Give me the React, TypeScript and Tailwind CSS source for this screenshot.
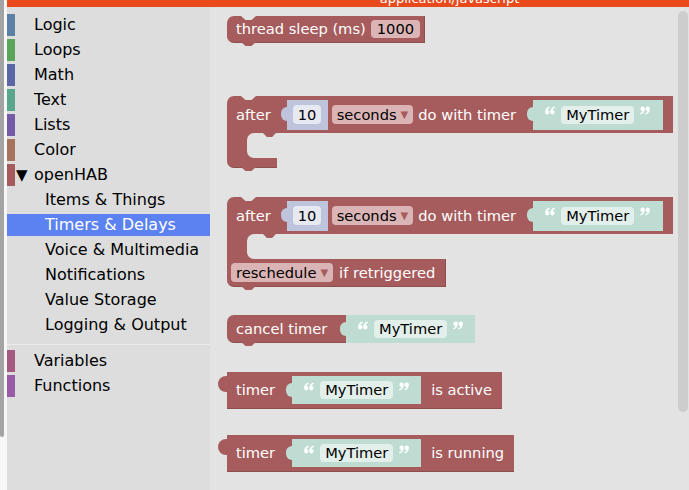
import React from "react";

const categories = [
  { name: "Logic", strip: "bg-[#5b80a5]" },
  { name: "Loops", strip: "bg-[#5ba55b]" },
  { name: "Math", strip: "bg-[#5b67a5]" },
  { name: "Text", strip: "bg-[#5ba58c]" },
  { name: "Lists", strip: "bg-[#745ba5]" },
  { name: "Color", strip: "bg-[#a5745b]" },
];

const subCategories = [
  "Items & Things",
  "Timers & Delays",
  "Voice & Multimedia",
  "Notifications",
  "Value Storage",
  "Logging & Output",
];

const Notch = () => (
  <span className="absolute left-[14px] top-0 h-[4px] w-[15px] bg-[#e3e3e3] [clip-path:polygon(0_0,100%_0,70%_100%,30%_100%)]" />
);

const NextTab = () => (
  <span className="absolute left-[14px] top-full h-[4px] w-[15px] bg-[#a65c5c] [clip-path:polygon(0_0,100%_0,70%_100%,30%_100%)]" />
);

// one "6" shaped quote mark, drawn around x = cx
const mark = (cx: number) =>
  `M${cx - 2.4} 6.2 C${cx - 2.4} 3.2 ${cx - 0.6} 1.2 ${cx + 2} 0.6 L${cx + 2.2} 1.9 C${cx + 0.8} 2.4 ${cx - 0.1} 3.1 ${cx} 4 A2.2 2.2 0 1 1 ${cx - 2.4} 6.2 Z`;

const Quote = ({ close }: { close?: boolean }) => (
  <svg
    width="10"
    height="9"
    viewBox="0 0 10 9"
    className={close ? "-mt-[8px] rotate-180" : "-mt-[8px]"}
  >
    <path d={mark(2.5) + mark(7.6)} fill="#ffffff" />
  </svg>
);

const TextShadow = ({ tall }: { tall?: boolean }) => (
  <div
    className={
      tall
        ? "relative flex h-[30px] w-[130px] items-center bg-[#bedcd2] pl-[12px]"
        : "relative flex h-[28px] w-[129px] items-center bg-[#bedcd2] pl-[12px]"
    }
  >
    <span className="absolute right-full top-[7px] h-[14px] w-[6px] rounded-l-full bg-[#bedcd2]" />
    <Quote />
    <span className="ml-[6px] mr-[6px] rounded-[4px] bg-[#e2efea] px-[5px] leading-[18px] text-black">MyTimer</span>
    <Quote close />
  </div>
);

const NumberShadow = () => (
  <div className="relative ml-[16px] flex h-[30px] w-[41px] items-center bg-[#bfc4dd] pl-[6px]">
    <span className="absolute right-full top-[7px] h-[14px] w-[6px] rounded-l-full bg-[#bfc4dd]" />
    <span className="rounded-[4px] bg-[#e7e9f2] px-[5px] leading-[19px] text-black">10</span>
  </div>
);

const Dropdown = ({ label }: { label: string }) => (
  <span className="flex h-[19px] items-center rounded-[4px] bg-[#dbb5b5] pl-[5px] pr-[5px] text-black">
    {label}
    <span className="ml-[4px] text-[10px] text-[#a65c5c]">▼</span>
  </span>
);

const AfterRow = () => (
  <div className="flex h-[37px] items-center rounded-tl-[7px] bg-[#a65c5c] pl-[9px] pr-[10px]">
    <span>after</span>
    <NumberShadow />
    <span className="ml-[4px]">
      <Dropdown label="seconds" />
    </span>
    <span className="ml-[5px] mr-[17px]">do with timer</span>
    <TextShadow tall />
  </div>
);

const Hole = () => (
  <div className="flex h-[25px]">
    <div className="w-[20px] bg-[#a65c5c]" />
    <div className="w-[40px] bg-[#a65c5c]">
      <div className="relative h-full rounded-l-[7px] bg-[#e3e3e3]">
        <span className="absolute left-[16px] top-0 h-[4px] w-[13px] bg-[#a65c5c] [clip-path:polygon(0_0,100%_0,70%_100%,30%_100%)]" />
      </div>
    </div>
  </div>
);

const TimerCheck = ({ label, className }: { label: string; className: string }) => (
  <div className={className}>
    <div className="relative flex h-[37px] w-fit items-center border-b border-[#8e4e4e] bg-[#a65c5c] pl-[9px] pr-[10px]">
      <span className="absolute right-full top-[4px] h-[16px] w-[9px] rounded-l-full bg-[#a65c5c]" />
      <span className="mr-[17px]">timer</span>
      <TextShadow />
      <span className="ml-[10px]">{label}</span>
    </div>
  </div>
);

export default function App() {
  return (
    <div className="flex h-[490px] w-[689px] overflow-hidden bg-[#f7f7f7] font-['DejaVu_Sans',sans-serif]">
      {/* window edge */}
      <div className="flex w-[7px] shrink-0">
        <div className="h-[437px] w-[4px] rounded-b-[2px] bg-[#a4a4a4]" />
      </div>

      <div className="flex flex-1 flex-col">
        {/* title bar */}
        <div className="flex h-[7px] shrink-0 justify-center overflow-hidden bg-[#e84a1c] pl-[203px]">
          <span className="-mt-[9px] text-[13px] leading-[16px] text-white">application/javascript</span>
        </div>

        <div className="flex flex-1">
          {/* toolbox */}
          <div className="w-[203px] shrink-0 bg-[#dddddd] pt-[7px] text-[16px] text-black">
            {categories.map((c) => (
              <div key={c.name} className="mb-[3px] flex h-[22px] items-center">
                <span className={`h-full w-[8px] ${c.strip}`} />
                <span className="ml-[19px]">{c.name}</span>
              </div>
            ))}
            <div className="mb-[3px] flex h-[22px] items-center">
              <span className="h-full w-[8px] bg-[#a55b5b]" />
              <span className="ml-[1px] w-[18px] text-[15px]">▼</span>
              <span>openHAB</span>
            </div>
            {subCategories.map((s) => (
              <div
                key={s}
                className={
                  s === "Timers & Delays"
                    ? "mb-[3px] flex h-[22px] items-center bg-[#5b82f0] pl-[38px] text-white"
                    : "mb-[3px] flex h-[22px] items-center pl-[38px]"
                }
              >
                {s}
              </div>
            ))}
            <div className="flex h-[11px] items-center">
              <div className="h-[1px] w-full bg-[#ebebeb]" />
            </div>
            <div className="mb-[3px] flex h-[22px] items-center">
              <span className="h-full w-[8px] bg-[#a55b80]" />
              <span className="ml-[19px]">Variables</span>
            </div>
            <div className="mb-[3px] flex h-[22px] items-center">
              <span className="h-full w-[8px] bg-[#995ba5]" />
              <span className="ml-[19px]">Functions</span>
            </div>
          </div>

          {/* flyout workspace */}
          <div className="flex flex-1 bg-[#e3e3e3]">
            <div className="flex flex-1 flex-col items-start pl-[17px] text-[14.67px] text-white">
              {/* thread sleep */}
              <div className="relative mt-[9px] flex h-[27px] items-center rounded-l-[7px] border-b border-r border-[#8e4e4e] bg-[#a65c5c] pl-[9px] pr-[4px]">
                <Notch />
                <NextTab />
                <span>thread sleep (ms)</span>
                <span className="ml-[5px] rounded-[4px] bg-[#dbb5b5] px-[6px] leading-[18px] text-black">1000</span>
              </div>

              {/* after ... do with timer */}
              <div className="relative mt-[53px]">
                <Notch />
                <AfterRow />
                <Hole />
                <div className="relative h-[10px] w-[50px] rounded-bl-[7px] border-b border-[#8e4e4e] bg-[#a65c5c]">
                  <NextTab />
                </div>
              </div>

              {/* after ... reschedule */}
              <div className="relative mt-[29px]">
                <Notch />
                <AfterRow />
                <Hole />
                <div className="relative flex h-[28px] w-[219px] items-center rounded-bl-[7px] border-b border-r border-[#8e4e4e] bg-[#a65c5c] pl-[4px]">
                  <Dropdown label="reschedule" />
                  <span className="ml-[6px]">if retriggered</span>
                  <NextTab />
                </div>
              </div>

              {/* cancel timer */}
              <div className="relative mt-[28px] flex">
                <Notch />
                <div className="relative flex h-[28px] w-[119px] items-center rounded-l-[7px] border-b border-[#8e4e4e] bg-[#a65c5c] pl-[9px]">
                  <span>cancel timer</span>
                  <NextTab />
                </div>
                <TextShadow />
              </div>

              <TimerCheck label="is active" className="mt-[29px]" />
              <TimerCheck label="is running" className="mt-[26px]" />
            </div>

            {/* scrollbar */}
            <div className="mr-[1px] w-[10px] shrink-0 pt-[4px]">
              <div className="h-[401px] rounded-full bg-[#cdcdcd]" />
            </div>
          </div>
        </div>
      </div>
    </div>
  );
}
